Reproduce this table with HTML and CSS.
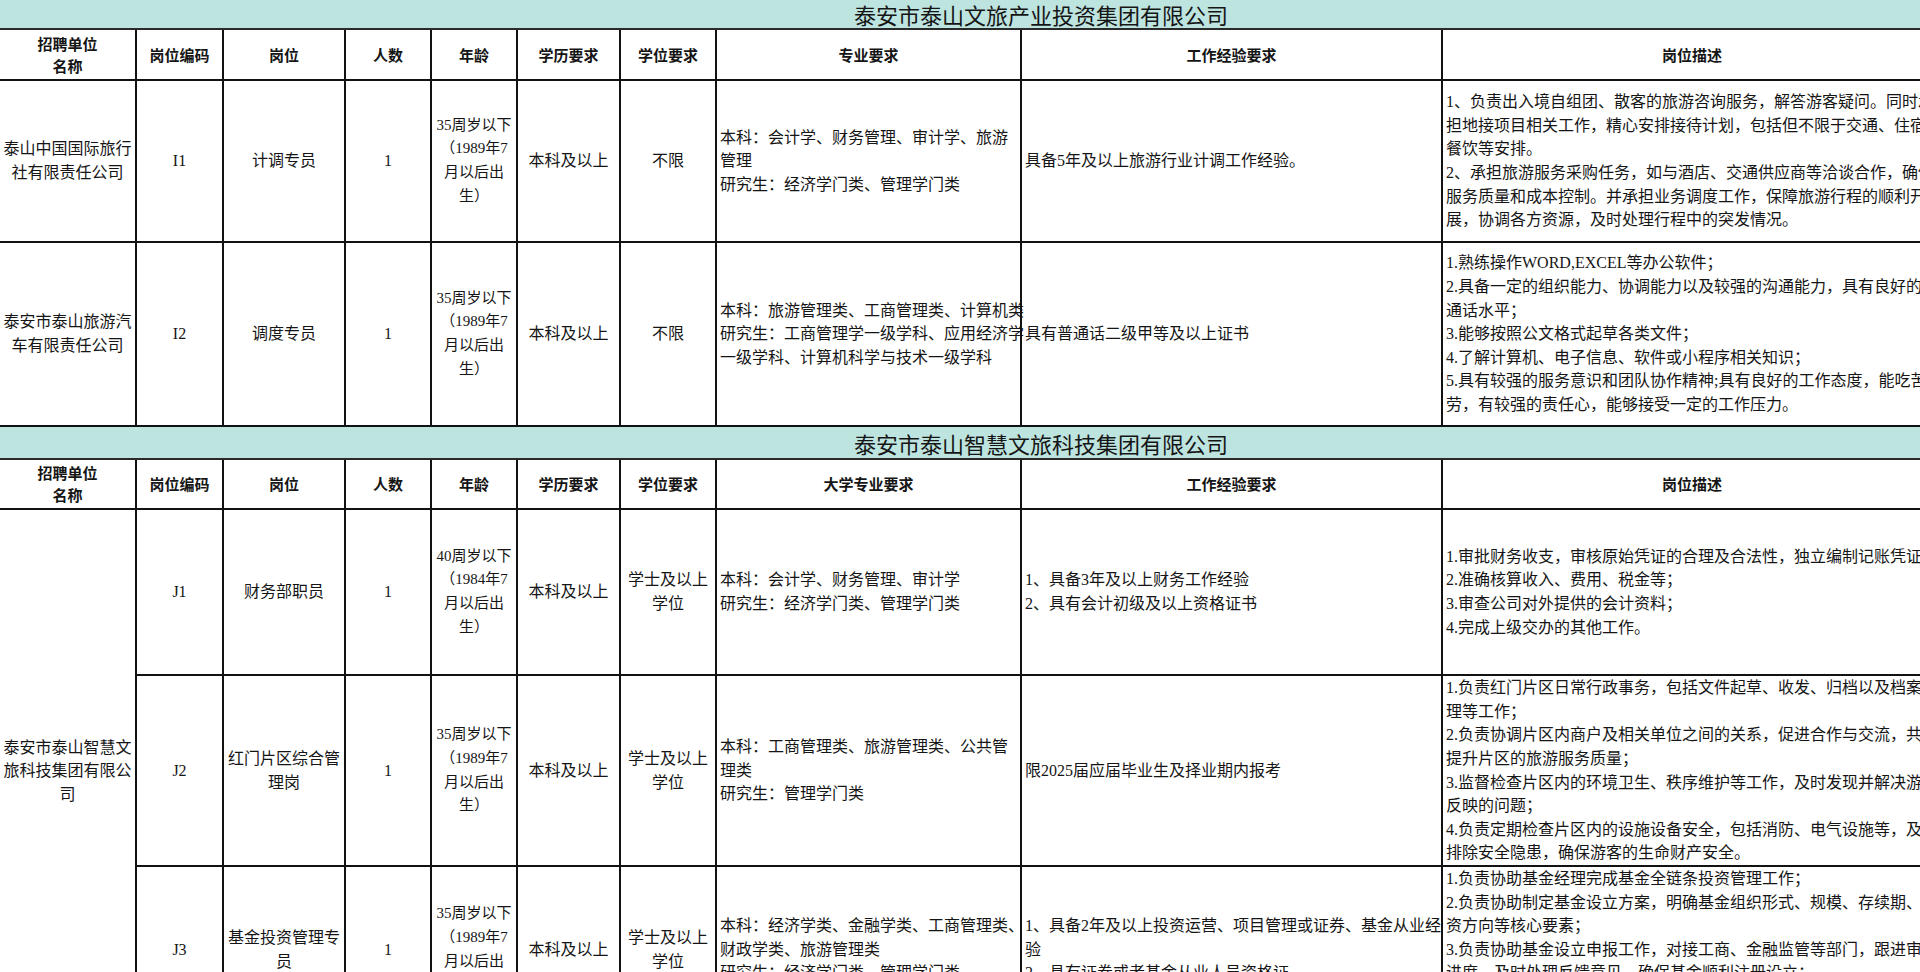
FILE: index.html
```html
<!DOCTYPE html>
<html lang="zh-CN">
<head>
<meta charset="utf-8">
<title>招聘岗位表</title>
<link rel="stylesheet" href="styles.css">
</head>
<body>
<table class="sheet">
  <colgroup>
    <col class="w-unit"><col class="w-code"><col class="w-post"><col class="w-num"><col class="w-age">
    <col class="w-edu"><col class="w-deg"><col class="w-major"><col class="w-exp"><col class="w-desc">
  </colgroup>
  <tbody>
    <tr class="title title-1"><td colspan="10">泰安市泰山文旅产业投资集团有限公司</td></tr>
    <tr class="head head-1">
      <th>招聘单位<br>名称</th><th>岗位编码</th><th>岗位</th><th>人数</th><th>年龄</th>
      <th>学历要求</th><th>学位要求</th><th>专业要求</th><th>工作经验要求</th><th>岗位描述</th>
    </tr>
    <tr class="row-i1">
      <td class="c">泰山中国国际旅行<br>社有限责任公司</td>
      <td class="c">I1</td>
      <td class="c">计调专员</td>
      <td class="c">1</td>
      <td class="c age">35周岁以下<br>（1989年7<br>月以后出<br>生）</td>
      <td class="c">本科及以上</td>
      <td class="c">不限</td>
      <td class="l">本科：会计学、财务管理、审计学、旅游<br>管理<br>研究生：经济学门类、管理学门类</td>
      <td class="l">具备5年及以上旅游行业计调工作经验。</td>
      <td class="l desc">1、负责出入境自组团、散客的旅游咨询服务，解答游客疑问。同时承<br>担地接项目相关工作，精心安排接待计划，包括但不限于交通、住宿、<br>餐饮等安排。<br>2、承担旅游服务采购任务，如与酒店、交通供应商等洽谈合作，确保<br>服务质量和成本控制。并承担业务调度工作，保障旅游行程的顺利开<br>展，协调各方资源，及时处理行程中的突发情况。</td>
    </tr>
    <tr class="row-i2">
      <td class="c">泰安市泰山旅游汽<br>车有限责任公司</td>
      <td class="c">I2</td>
      <td class="c">调度专员</td>
      <td class="c">1</td>
      <td class="c age">35周岁以下<br>（1989年7<br>月以后出<br>生）</td>
      <td class="c">本科及以上</td>
      <td class="c">不限</td>
      <td class="l">本科：旅游管理类、工商管理类、计算机类<br>研究生：工商管理学一级学科、应用经济学<br>一级学科、计算机科学与技术一级学科</td>
      <td class="l">具有普通话二级甲等及以上证书</td>
      <td class="l desc">1.熟练操作WORD,EXCEL等办公软件；<br>2.具备一定的组织能力、协调能力以及较强的沟通能力，具有良好的普<br>通话水平；<br>3.能够按照公文格式起草各类文件；<br>4.了解计算机、电子信息、软件或小程序相关知识；<br>5.具有较强的服务意识和团队协作精神;具有良好的工作态度，能吃苦耐<br>劳，有较强的责任心，能够接受一定的工作压力。</td>
    </tr>
    <tr class="title title-2"><td colspan="10">泰安市泰山智慧文旅科技集团有限公司</td></tr>
    <tr class="head head-2">
      <th>招聘单位<br>名称</th><th>岗位编码</th><th>岗位</th><th>人数</th><th>年龄</th>
      <th>学历要求</th><th>学位要求</th><th>大学专业要求</th><th>工作经验要求</th><th>岗位描述</th>
    </tr>
    <tr class="row-j1">
      <td class="c" rowspan="3">泰安市泰山智慧文<br>旅科技集团有限公<br>司</td>
      <td class="c">J1</td>
      <td class="c">财务部职员</td>
      <td class="c">1</td>
      <td class="c age">40周岁以下<br>（1984年7<br>月以后出<br>生）</td>
      <td class="c">本科及以上</td>
      <td class="c">学士及以上<br>学位</td>
      <td class="l">本科：会计学、财务管理、审计学<br>研究生：经济学门类、管理学门类</td>
      <td class="l">1、具备3年及以上财务工作经验<br>2、具有会计初级及以上资格证书</td>
      <td class="l desc">1.审批财务收支，审核原始凭证的合理及合法性，独立编制记账凭证；<br>2.准确核算收入、费用、税金等；<br>3.审查公司对外提供的会计资料；<br>4.完成上级交办的其他工作。</td>
    </tr>
    <tr class="row-j2">
      <td class="c">J2</td>
      <td class="c">红门片区综合管<br>理岗</td>
      <td class="c">1</td>
      <td class="c age">35周岁以下<br>（1989年7<br>月以后出<br>生）</td>
      <td class="c">本科及以上</td>
      <td class="c">学士及以上<br>学位</td>
      <td class="l">本科：工商管理类、旅游管理类、公共管<br>理类<br>研究生：管理学门类</td>
      <td class="l">限2025届应届毕业生及择业期内报考</td>
      <td class="l desc">1.负责红门片区日常行政事务，包括文件起草、收发、归档以及档案管<br>理等工作；<br>2.负责协调片区内商户及相关单位之间的关系，促进合作与交流，共同<br>提升片区的旅游服务质量；<br>3.监督检查片区内的环境卫生、秩序维护等工作，及时发现并解决游客<br>反映的问题；<br>4.负责定期检查片区内的设施设备安全，包括消防、电气设施等，及时<br>排除安全隐患，确保游客的生命财产安全。</td>
    </tr>
    <tr class="row-j3">
      <td class="c">J3</td>
      <td class="c">基金投资管理专<br>员</td>
      <td class="c">1</td>
      <td class="c age">35周岁以下<br>（1989年7<br>月以后出<br>生）</td>
      <td class="c">本科及以上</td>
      <td class="c">学士及以上<br>学位</td>
      <td class="l">本科：经济学类、金融学类、工商管理类、<br>财政学类、旅游管理类<br>研究生：经济学门类、管理学门类</td>
      <td class="l">1、具备2年及以上投资运营、项目管理或证券、基金从业经<br>验<br>2、具有证券或者基金从业人员资格证</td>
      <td class="l desc">1.负责协助基金经理完成基金全链条投资管理工作；<br>2.负责协助制定基金设立方案，明确基金组织形式、规模、存续期、投<br>资方向等核心要素；<br>3.负责协助基金设立申报工作，对接工商、金融监管等部门，跟进审批<br>进度，及时处理反馈意见，确保基金顺利注册设立；<br>4.负责基金投后管理，定期跟踪被投项目运营情况；<br>5.完成上级交办的其他工作。</td>
    </tr>
  </tbody>
</table>
</body>
</html>
```
FILE: styles.css
```css
html, body {
  margin: 0;
  padding: 0;
  overflow: hidden;
  background: #ffffff;
}

body {
  font-family: "Liberation Serif", "Noto Sans CJK SC", sans-serif;
  font-size: 16px;
  color: #151515;
}

.sheet {
  border-collapse: collapse;
  table-layout: fixed;
  width: 1942px;
}

.w-unit { width: 136px; }
.w-code { width: 87px; }
.w-post { width: 122px; }
.w-num { width: 86px; }
.w-age { width: 86px; }
.w-edu { width: 103px; }
.w-deg { width: 96px; }
.w-major { width: 305px; }
.w-exp { width: 421px; }
.w-desc { width: 500px; }

.sheet td,
.sheet th {
  border: 2px solid #121212;
  padding: 0 3px;
  vertical-align: middle;
  line-height: 23.6px;
  white-space: nowrap;
  overflow: visible;
}

.sheet tr > :first-child {
  border-left: none;
}

.title td {
  background: #bee4e0;
  font-family: "Noto Sans CJK SC", sans-serif;
  font-size: 22px;
  line-height: 26px;
  text-align: center;
  padding-left: 144px;
  border-color: #2a2a2a;
}

.title-1 td {
  border-top: none;
}

.title-1 { height: 29px; }
.title-2 { height: 33px; }

.sheet th {
  font-family: "Noto Sans CJK SC", sans-serif;
  font-weight: 700;
  font-size: 15px;
  line-height: 22px;
  text-align: center;
}

.head-1 { height: 51px; }
.head-2 { height: 50px; }
.row-i1 { height: 162px; }
.row-i2 { height: 184px; }
.row-j1 { height: 166px; }
.row-j2 { height: 191px; }
.row-j3 { height: 164px; }

.c { text-align: center; }
.l { text-align: left; }

.age {
  font-size: 15px;
  line-height: 24px;
  padding: 0;
}
```
